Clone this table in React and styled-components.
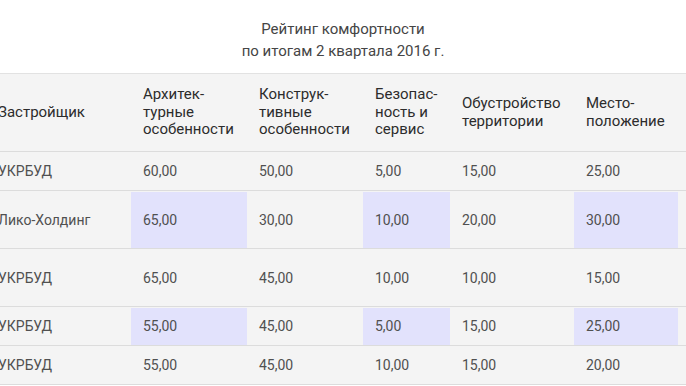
import React from "react";
import styled, { createGlobalStyle } from "styled-components";

const GlobalStyle = createGlobalStyle`
  body {
    margin: 0;
    background: #ffffff;
    font-family: Roboto, "Noto Sans", sans-serif;
  }
`;

const Page = styled.div`
  width: 686px;
  height: 386px;
  overflow: hidden;
`;

const Title = styled.div`
  padding-top: 18px;
  text-align: center;
  font-size: 15px;
  line-height: 22px;
  color: #454545;
`;

const TableWrap = styled.div`
  margin-top: 11px;
  margin-left: -14px;
  width: 760px;
  background: #f4f4f4;
  border-top: 1px solid #e2e2e2;
`;

const Table = styled.table`
  border-collapse: collapse;
  width: 100%;
  table-layout: fixed;
`;

const HeadCell = styled.th`
  height: 77px;
  padding: 0 12px;
  text-align: left;
  font-weight: 400;
  font-size: 15px;
  line-height: 17.5px;
  color: #2c2c2c;
  vertical-align: middle;
  border-bottom: 1px solid #dcdcdc;
`;

const Row = styled.tr`
  height: ${(p) => (p.$tall ? "58px" : "39px")};
`;

const Cell = styled.td`
  padding: 0 12px;
  font-size: 14px;
  color: #505050;
  vertical-align: middle;
  border-bottom: 1px solid #dcdcdc;
  background: ${(p) => (p.$hl ? "#e2e2fc" : "transparent")};
  box-shadow: ${(p) => (p.$hl ? "inset 0 1px 0 #f4f4f4" : "none")};
`;

const widths = [145, 116, 116, 87, 124, 104, 68];

const headers = [
  "Застройщик",
  "Архитек-\nтурные\nособенности",
  "Конструк-\nтивные\nособенности",
  "Безопас-\nность и\nсервис",
  "Обустройство\nтерритории",
  "Место-\nположение",
  "",
];

const rows = [
  { name: "УКРБУД", vals: ["60,00", "50,00", "5,00", "15,00", "25,00", ""], hl: false, tall: false },
  { name: "Лико-Холдинг", vals: ["65,00", "30,00", "10,00", "20,00", "30,00", ""], hl: true, tall: true },
  { name: "УКРБУД", vals: ["65,00", "45,00", "10,00", "10,00", "15,00", ""], hl: false, tall: true },
  { name: "УКРБУД", vals: ["55,00", "45,00", "5,00", "15,00", "25,00", ""], hl: true, tall: false },
  { name: "УКРБУД", vals: ["55,00", "45,00", "10,00", "15,00", "20,00", ""], hl: false, tall: false },
];

const HeadText = ({ text }) =>
  text.split("\n").map((line, i) => (
    <React.Fragment key={i}>
      {i > 0 && <br />}
      {line}
    </React.Fragment>
  ));

export default function App() {
  return (
    <Page>
      <GlobalStyle />
      <Title>
        Рейтинг комфортности
        <br />
        по итогам 2 квартала 2016 г.
      </Title>
      <TableWrap>
        <Table>
          <colgroup>
            {widths.map((w, i) => (
              <col key={i} style={{ width: w }} />
            ))}
          </colgroup>
          <thead>
            <tr>
              {headers.map((h, i) => (
                <HeadCell key={i}>
                  <HeadText text={h} />
                </HeadCell>
              ))}
            </tr>
          </thead>
          <tbody>
            {rows.map((r, ri) => (
              <Row key={ri} $tall={r.tall}>
                <Cell>{r.name}</Cell>
                {r.vals.map((v, vi) => (
                  <Cell key={vi} $hl={r.hl && (vi === 0 || vi === 2 || vi === 4)}>
                    {v}
                  </Cell>
                ))}
              </Row>
            ))}
          </tbody>
        </Table>
      </TableWrap>
    </Page>
  );
}
